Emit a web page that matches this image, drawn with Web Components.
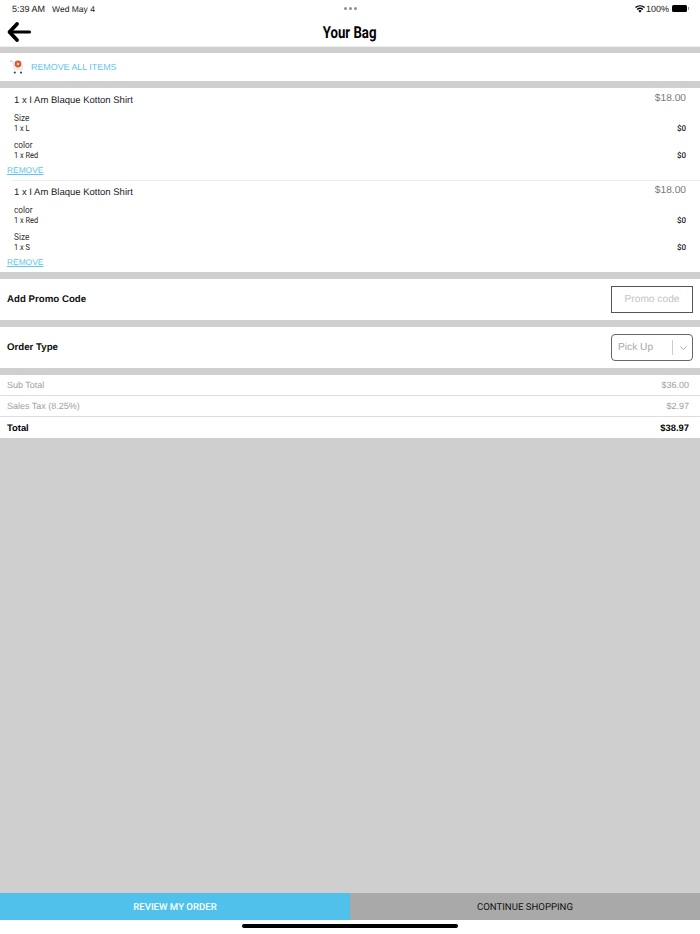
<!DOCTYPE html>
<html>
<head>
<meta charset="utf-8">
<title>Your Bag</title>
<style>
  html, body { margin: 0; height: 100%; }
  body { font-family: "Liberation Sans", Arial, sans-serif; background: #fff; text-rendering: geometricPrecision; }
</style>
</head>
<body>
<bag-app>
  <status-bar></status-bar>
  <bag-header>Your Bag</bag-header>
  <remove-all></remove-all>
  <bag-items>
    <bag-item name="1 x I Am Blaque Kotton Shirt" price="$18.00" options="Size|1 x L,color|1 x Red"></bag-item>
    <bag-item name="1 x I Am Blaque Kotton Shirt" price="$18.00" options="color|1 x Red,Size|1 x S"></bag-item>
  </bag-items>
  <form-row label="Add Promo Code"><promo-input></promo-input></form-row>
  <form-row label="Order Type"><order-select></order-select></form-row>
  <bag-totals></bag-totals>
  <bag-footer></bag-footer>
</bag-app>

<script>
function define(name, html, init) {
  customElements.define(name, class extends HTMLElement {
    constructor() {
      super();
      this.root = this.attachShadow({mode: 'open'});
      this.root.innerHTML = html;
    }
    connectedCallback() {
      if (init) init.call(this);
    }
  });
}

define('bag-app', `
<style>
  :host {
    display: flex;
    flex-direction: column;
    height: 934px;
    background: #cfcfcf;
  }
</style>
<slot></slot>
`);

define('status-bar', `
<style>
  :host {
    display: grid;
    grid-template-columns: 1fr auto 1fr;
    align-items: center;
    height: 17px;
    padding: 0 11px 0 12px;
    background: #fff;
    font-size: 9px;
    color: #222;
  }
  .date { margin-left: 7px; font-size: 8.500px; }
  .mid { display: flex; gap: 2px; }
  .mid i { width: 3px; height: 3px; border-radius: 50%; background: #8d8d8d; }
  .right { display: flex; align-items: center; justify-content: flex-end; gap: 1px; }
  .batt { display: flex; align-items: center; margin-left: 2px; }
  .batt b { width: 15px; height: 7px; background: #000; border-radius: 1.500px; }
  .batt i { width: 1px; height: 3px; background: #999; margin-left: 1px; }
</style>
<div><span>5:39 AM</span><span class="date">Wed May 4</span></div>
<div class="mid"><i></i><i></i><i></i></div>
<div class="right">
  <svg width="10" height="8" viewBox="0 0 11 8"><path d="M5.500 8 3.700 5.900a2.700 2.700 0 0 1 3.600 0zM2.900 5 1.900 3.900a5.400 5.400 0 0 1 7.200 0L8.100 5a4 4 0 0 0-5.200 0zM1.100 3 0 1.900a8.200 8.200 0 0 1 11 0L9.900 3a6.700 6.700 0 0 0-8.800 0z" fill="#000"/></svg>
  <span>100%</span>
  <span class="batt"><b></b><i></i></span>
</div>
`);

define('bag-header', `
<style>
  :host {
    display: flex;
    align-items: center;
    justify-content: center;
    position: relative;
    height: 29px;
    background: #fff;
    border-bottom: 1px solid #eee;
    margin-bottom: 6px;
    color: #000;
  }
  span { display: inline-block; padding-top: 3px; font: bold 16.500px Roboto, sans-serif; transform: scaleX(.8); }
  svg { position: absolute; left: 6px; top: 4px; }
</style>
<svg width="26" height="22" viewBox="0 0 26 22"><path d="M23.500 11H4" fill="none" stroke="#000" stroke-width="3.200" stroke-linecap="round"/><path d="M11 3 3.500 11l7.500 8" fill="none" stroke="#000" stroke-width="3.800" stroke-linecap="round" stroke-linejoin="round"/></svg>
<span><slot></slot></span>
`);

define('remove-all', `
<style>
  :host {
    display: flex;
    align-items: center;
    height: 28px;
    padding-left: 10px;
    background: #fff;
    margin-bottom: 7px;
    font-size: 8.900px;
    color: #5cc6ed;
  }
  svg { margin-right: 6px; }
</style>
<svg width="15" height="16" viewBox="0 0 15 16">
  <path d="M1 2.500h2l1 8h8.500V6" fill="#fafafa" stroke="#d8d8d8" stroke-width=".8"/>
  <path d="M3.400 5h9.100v5.500H4z" fill="#f1f1f1"/>
  <circle cx="4.800" cy="13.600" r="1.100" fill="#3c4a57"/>
  <circle cx="11" cy="13.600" r="1.100" fill="#3c4a57"/>
  <circle cx="8" cy="5" r="3.400" fill="#dc5a2c"/>
  <path d="M6.800 3.800l2.400 2.400M9.200 3.800 6.800 6.200" stroke="#fff" stroke-width=".8"/>
  <circle cx="1" cy="2" r=".6" fill="#dc5a2c"/>
</svg>
REMOVE ALL ITEMS
`);

define('bag-items', `
<style>
  :host {
    display: block;
    background: #fff;
    margin-bottom: 7px;
  }
  ::slotted(bag-item:last-child) { border-top: 1px solid #eee; margin-left: 11px; }
</style>
<slot></slot>
`);

define('bag-item', `
<style>
  :host {
    display: block;
    position: relative;
    height: 92px;
    box-sizing: border-box;
  }
  .wrap { padding: 3px 14px 0 7px; }
  .top { display: flex; justify-content: space-between; }
  .name { font-size: 9.500px; color: #222; margin: 4px 0 0 7px; line-height: 12px; }
  .price { font-size: 10.200px; color: #777; margin-top: 2px; line-height: 12px; }
  .opt { display: flex; justify-content: space-between; align-items: flex-end; margin: 6px 0 0 7px; font: 9.500px Roboto, sans-serif; line-height: 10px; color: #333; height: 21px; }
  .opt > div { transform: scaleX(.87); transform-origin: left; }
  .opt span.v { display: block; font-size: 8.500px; color: #222; }
  .opt .p { font-size: 8px; color: #222; font-weight: 500; }
  a { position: absolute; left: 7px; top: 77px; font-size: 8.400px; line-height: 10px; color: #5cc6ed; text-decoration: underline; }
</style>
<div class="wrap">
  <div class="top"><div class="name"></div><div class="price"></div></div>
  <div class="opts"></div>
</div>
<a>REMOVE</a>
`, function () {
  const r = this.root;
  r.querySelector('.name').textContent = this.getAttribute('name');
  r.querySelector('.price').textContent = this.getAttribute('price');
  r.querySelector('.opts').innerHTML = this.getAttribute('options').split(',').map((o) => {
    const [k, v] = o.split('|');
    return `<div class="opt"><div>${k}<span class="v">${v}</span></div><span class="p">$0</span></div>`;
  }).join('');
  // second row is inset by its divider, keep the text on the same left edge
  if (this.previousElementSibling) {
    const wrap = r.querySelector('.wrap');
    wrap.style.marginLeft = '-11px';
    wrap.style.paddingTop = '2px';
    r.querySelector('a').style.left = '-4px';
    r.querySelector('a').style.top = '76px';
  }
});

define('form-row', `
<style>
  :host {
    display: flex;
    align-items: center;
    justify-content: space-between;
    height: 41px;
    padding: 0 7px;
    background: #fff;
    margin-bottom: 7px;
    font-size: 9.700px;
    font-weight: bold;
    color: #111;
  }
</style>
<span id="label"></span><slot></slot>
`, function () {
  this.root.getElementById('label').textContent = this.getAttribute('label');
});

define('promo-input', `
<style>
  :host {
    display: flex;
    align-items: center;
    justify-content: center;
    box-sizing: border-box;
    width: 82px;
    height: 27px;
    border: 1px solid #555;
    font-size: 10.200px;
    font-weight: normal;
    color: #c4c4c4;
  }
</style>
Promo code
`);

define('order-select', `
<style>
  :host {
    display: flex;
    align-items: center;
    box-sizing: border-box;
    width: 82px;
    height: 27px;
    border: 1px solid #666;
    border-radius: 4px;
    padding-left: 6px;
    font-size: 10.200px;
    font-weight: normal;
    color: #a8a8a8;
  }
  span { flex: 1; }
  i { width: 1px; height: 15px; background: #ccc; margin-right: 7px; }
  svg { margin-right: 5px; }
</style>
<span>Pick Up</span><i></i>
<svg width="7" height="4" viewBox="0 0 7 4"><path d="M.5.500 3.500 3.500 6.500.500" fill="none" stroke="#999" stroke-width=".8"/></svg>
`);

define('bag-totals', `
<style>
  :host {
    display: block;
    background: #fff;
    font-size: 9px;
  }
  .row { display: flex; align-items: center; justify-content: space-between; height: 20px; padding: 0 11px 0 7px; color: #a0a0a0; border-bottom: 1px solid #ddd; }
  .row.total { height: 21px; border-bottom: 0; color: #000; font-weight: bold; font-size: 9.400px; }
</style>
<div class="row"><span>Sub Total</span><span>$36.00</span></div>
<div class="row"><span>Sales Tax (8.25%)</span><span>$2.97</span></div>
<div class="row total"><span>Total</span><span>$38.97</span></div>
`);

define('bag-footer', `
<style>
  :host {
    display: block;
    margin-top: auto;
    background: #fff;
  }
  .btns { display: grid; grid-template-columns: 1fr 1fr; height: 27px; }
  .btns div { display: flex; align-items: center; justify-content: center; padding-top: 1px; font: 9.600px Roboto, sans-serif; }
  .a { background: #4fc1ea; color: #fff; font-weight: 500 !important; }
  .b { background: #a9a9a9; color: #111; }
  .home { height: 14px; display: flex; justify-content: center; padding-top: 4px; box-sizing: border-box; }
  .home i { width: 216px; height: 4px; border-radius: 2px; background: #000; }
</style>
<div class="btns"><div class="a">REVIEW MY ORDER</div><div class="b">CONTINUE SHOPPING</div></div>
<div class="home"><i></i></div>
`);
</script>
</body>
</html>
